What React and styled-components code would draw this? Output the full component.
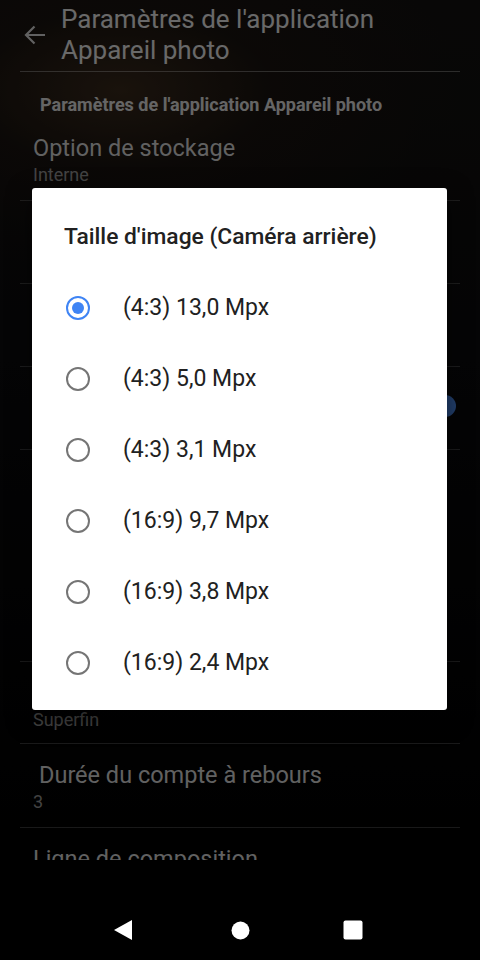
import React from 'react';
import styled, { createGlobalStyle } from 'styled-components';

const GlobalStyle = createGlobalStyle`
  html, body {
    margin: 0;
    padding: 0;
    background: #000;
    font-family: Roboto, "Noto Sans", sans-serif;
  }
`;

const Phone = styled.div`
  width: 480px;
  height: 960px;
  display: flex;
  flex-direction: column;
  background: #000;
  overflow: hidden;
`;

const Screen = styled.div`
  position: relative;
  height: 900px;
  background: radial-gradient(ellipse 340px 180px at 120px 90px, #3a2a1c 0%, rgba(30, 22, 16, 0.6) 45%, transparent 100%),
    linear-gradient(180deg, #141210 0%, #0c0c0e 40%, #000 100%);
`;

const Content = styled.div`
  height: 860px;
  overflow: hidden;
  padding: 0 20px;
  color: #fff;
`;

const Header = styled.header`
  display: flex;
  align-items: flex-start;
  height: 71px;
  border-bottom: 1px solid rgba(255, 255, 255, 0.35);
`;

const BackButton = styled.div`
  width: 37px;
  padding: 25px 0 0 4px;
  color: #ddd;
`;

const Title = styled.h1`
  margin: 4px 0 0;
  font-size: 26px;
  line-height: 31px;
  font-weight: 400;
  color: #eee;
`;

const Category = styled.div`
  padding: 22px 0 1px 20px;
  font-size: 18px;
  line-height: 22px;
  font-weight: 700;
  color: #e6e6e6;
`;

const Row = styled.div`
  height: ${p => p.h}px;
  box-sizing: border-box;
  padding: 17px 0 0 13px;
  border-bottom: ${p => (p.last ? 'none' : '1px solid rgba(255, 255, 255, 0.22)')};
  display: flex;
  flex-direction: column;
  position: relative;
`;

const RowTitle = styled.div`
  padding-left: ${p => p.indent || 0}px;
  font-size: 23.5px;
  line-height: 28px;
  color: #ddd;
  white-space: nowrap;
`;

const RowSummary = styled.div`
  margin-top: 2px;
  font-size: 18px;
  line-height: 22px;
  color: #999;
`;

const Switch = styled.div`
  position: absolute;
  right: 6px;
  top: 32px;
  width: 36px;
  height: 14px;
  border-radius: 7px;
  background: #3b5f99;

  &::after {
    content: '';
    position: absolute;
    right: -2px;
    top: -4px;
    width: 22px;
    height: 22px;
    border-radius: 50%;
    background: #4f8ff6;
  }
`;

const Scrim = styled.div`
  position: absolute;
  inset: 0;
  background: rgba(0, 0, 0, 0.56);
  display: flex;
  align-items: center;
  justify-content: center;
`;

const Dialog = styled.div`
  width: 415px;
  margin: -2px 0 0 -1px;
  box-sizing: border-box;
  background: #fff;
  border-radius: 3px;
  padding: 36px 0 12px;
  box-shadow: 0 8px 24px rgba(0, 0, 0, 0.5);
`;

const DialogTitle = styled.h2`
  margin: 0 0 22px 32px;
  font-size: 22.8px;
  line-height: 26px;
  font-weight: 500;
  color: #212121;
`;

const Option = styled.div`
  height: 71px;
  display: flex;
  align-items: center;
  padding-left: 34px;
  gap: 33px;
  font-size: 23px;
  color: #212121;
`;

const Radio = styled.span`
  width: 24px;
  height: 24px;
  flex-shrink: 0;
  box-sizing: border-box;
  border-radius: 50%;
  border: 2px solid ${p => (p.checked ? '#3f84f4' : '#757575')};
  display: flex;
  align-items: center;
  justify-content: center;

  &::after {
    content: '';
    width: 12px;
    height: 12px;
    border-radius: 50%;
    background: ${p => (p.checked ? '#3f84f4' : 'transparent')};
  }
`;

const NavBar = styled.nav`
  height: 60px;
  display: flex;
  align-items: center;
  justify-content: center;
  background: #000;
`;

const NavSlot = styled.div`
  width: 113px;
  display: flex;
  justify-content: center;
`;

const rows = [
  { title: 'Option de stockage', summary: 'Interne', h: 84 },
  { title: "Taille d'image (Caméra arrière)", summary: '(4:3) 13,0 Mpx', h: 83 },
  { title: "Taille d'image (Caméra avant)", summary: '(4:3) 5,0 Mpx', h: 83 },
  { title: 'Enregistrer la position', summary: 'Ajouter la position aux photos', h: 83, toggle: true },
  { title: 'Qualité vidéo (Caméra arrière)', summary: 'HD 1080p', h: 212 },
  { title: "Qualité de l'image", summary: 'Superfin', h: 82 },
  { title: 'Durée du compte à rebours', summary: '3', h: 84, indent: 6 },
  { title: 'Ligne de composition', summary: 'Désactivé', h: 83, last: true },
];

const sizes = [
  '(4:3) 13,0 Mpx',
  '(4:3) 5,0 Mpx',
  '(4:3) 3,1 Mpx',
  '(16:9) 9,7 Mpx',
  '(16:9) 3,8 Mpx',
  '(16:9) 2,4 Mpx',
];

function BackArrow() {
  return (
    <svg width="22" height="20" viewBox="0 0 22 20" fill="none" stroke="currentColor" strokeWidth="2.2">
      <path d="M21 10H2M10.5 1.5L2 10l8.5 8.5" />
    </svg>
  );
}

export default function App() {
  return (
    <>
      <GlobalStyle />
      <Phone>
        <Screen>
          <Content>
            <Header>
              <BackButton><BackArrow /></BackButton>
              <Title>Paramètres de l'application<br />Appareil photo</Title>
            </Header>
            <Category>Paramètres de l'application Appareil photo</Category>
            {rows.map(r => (
              <Row key={r.title} h={r.h} last={r.last}>
                <RowTitle indent={r.indent}>{r.title}</RowTitle>
                <RowSummary>{r.summary}</RowSummary>
                {r.toggle && <Switch />}
              </Row>
            ))}
          </Content>
          <Scrim>
            <Dialog>
              <DialogTitle>Taille d'image (Caméra arrière)</DialogTitle>
              {sizes.map((s, i) => (
                <Option key={s}>
                  <Radio checked={i === 0} />
                  {s}
                </Option>
              ))}
            </Dialog>
          </Scrim>
        </Screen>
        <NavBar>
          <NavSlot>
            <svg width="28" height="22" viewBox="0 0 28 22"><path d="M19 1v20L1 11z" fill="#fff" /></svg>
          </NavSlot>
          <NavSlot>
            <svg width="19" height="19" viewBox="0 0 19 19"><circle cx="9.5" cy="9.5" r="9" fill="#fff" /></svg>
          </NavSlot>
          <NavSlot>
            <svg width="20" height="20" viewBox="0 0 20 20"><rect x="0.5" y="0.5" width="19" height="19" rx="2" fill="#fff" /></svg>
          </NavSlot>
        </NavBar>
      </Phone>
    </>
  );
}
